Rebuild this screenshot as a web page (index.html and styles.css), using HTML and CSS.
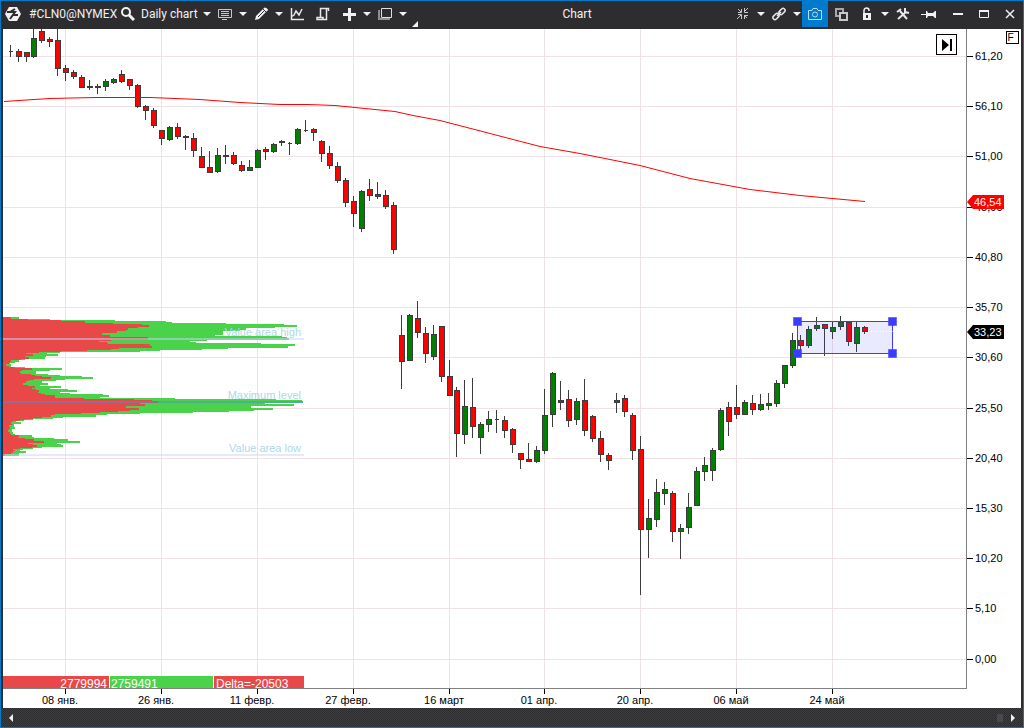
FILE: index.html
```html
<!DOCTYPE html>
<html lang="ru">
<head>
  <meta charset="UTF-8" />
  <meta name="viewport" content="width=device-width, initial-scale=1.0"/>
  <title>Chart</title>
  <link rel="stylesheet" href="styles.css">
</head>
<body>
  <header class="titlebar">
    <svg class="logo" width="18" height="16" viewBox="0 0 18 16"><path fill="#f1f1f1" d="M5 1h8l4 7-4 7H5L1 8z"/><path fill="none" stroke="#2d2d30" stroke-width="2" d="M3 6h8l-5 7M9 9h5M6 6l5-3"/></svg>
    <span class="symbol">#CLN0@NYMEX</span>
    <button class="tool find" aria-label="Find instrument"><svg width="14" height="14" viewBox="0 0 14 14"><circle cx="5" cy="5" r="4" fill="none" stroke="#f1f1f1" stroke-width="2"/><path stroke="#f1f1f1" stroke-width="3" d="M8 8l5 5"/></svg></button>
    <button class="period">Daily chart</button>
    <button class="caret" aria-label="Period list"></button>
    <button class="tool" aria-label="Template"><svg width="14" height="12" viewBox="0 0 14 12"><path fill="none" stroke="#c8c8c8" d="M.5 1.500h13v8H.5zM3 3.500h8M3 5.500h8M3 7.500h8M4 11.500h5"/></svg></button>
    <button class="caret" aria-label="Template list"></button>
    <button class="tool" aria-label="Draw"><svg width="14" height="14" viewBox="0 0 14 14"><path fill="#f1f1f1" d="M1 13l1-4 8-8q1-1 3 .5T13 4l-8 8z"/><path stroke="#2d2d30" d="M4 10l6-6M9 2l3 3"/></svg></button>
    <button class="caret" aria-label="Draw list"></button>
    <button class="tool" aria-label="Indicators"><svg width="14" height="14" viewBox="0 0 14 14"><path fill="none" stroke="#e8e8e8" stroke-width="1.500" d="M1.500 1v11.500H14M1 10l3-2 2-4 3 4 3-6"/></svg></button>
    <button class="tool" aria-label="Strategies"><svg width="14" height="14" viewBox="0 0 14 14"><path fill="none" stroke="#e8e8e8" stroke-width="1.500" d="M4.500 11V1.500h8V4M10.500 2v10.500H1V10.500h6v2"/></svg></button>
    <button class="tool" aria-label="Add"><svg width="14" height="14" viewBox="0 0 14 14"><path stroke="#f1f1f1" stroke-width="3" d="M7.500 1v13M1 7.500h13"/></svg></button>
    <button class="caret" aria-label="Add list"></button>
    <button class="tool" aria-label="Windows"><svg width="14" height="14" viewBox="0 0 14 14"><path fill="none" stroke="#e0e0e0" d="M3.500 1.500h10v9h-10z"/><path fill="none" stroke="#909090" stroke-width="2" d="M1 3v9h11"/></svg></button>
    <button class="caret" aria-label="Windows list"></button>
    <svg class="corner" width="6" height="6" viewBox="0 0 6 6"><path fill="#f1f1f1" d="M6 0v6H0z"/></svg>
    <h1 class="caption">Chart</h1>
    <button class="tool" aria-label="Snap"><svg width="12" height="12" viewBox="0 0 12 12"><path fill="none" stroke="#c8c8c8" d="M0 11l4-4M7 4l4-4M1 1l3 3M7 7l3 3M4.500 1v3.500H1M7.500 0v4.500H11M1 6.500h3.500V11M11 7.500H7.500V11"/></svg></button>
    <button class="caret" aria-label="Snap list"></button>
    <button class="tool" aria-label="Link"><svg width="14" height="14" viewBox="0 0 14 14"><g fill="none" stroke="#e8e8e8" stroke-width="1.500"><rect x="6.500" y="2.500" width="7" height="4" rx="2" transform="rotate(-45 10 4.500)"/><rect x=".5" y="7.500" width="7" height="4" rx="2" transform="rotate(-45 4 9.500)"/><path d="M5 9l4-4"/></g></svg></button>
    <button class="caret" aria-label="Link list"></button>
    <button class="tool active" aria-label="Screenshot"><svg width="14" height="12" viewBox="0 0 14 12"><path fill="none" stroke="#b8dcf4" d="M.5 2.500H4l1-2h4l1 2h3.500v9H.5z"/><circle cx="7" cy="6.500" r="2.500" fill="none" stroke="#b8dcf4"/></svg></button>
    <button class="tool" aria-label="Copy window"><svg width="14" height="14" viewBox="0 0 14 14"><path fill="none" stroke="#a8a8a8" stroke-width="2" d="M5 9H2V2h7v3"/><path fill="none" stroke="#c8c8c8" stroke-width="2" d="M6 6h7v7H6z"/></svg></button>
    <button class="tool" aria-label="Lock"><svg width="10" height="14" viewBox="0 0 10 14"><path fill="none" stroke="#f1f1f1" stroke-width="1.500" d="M2 7V3.500a2.500 2.500 0 0 1 5 0V4"/><path fill="#f1f1f1" fill-rule="evenodd" d="M1 6h8v7H1zM4 8v3h2V8z"/></svg></button>
    <button class="caret" aria-label="Lock list"></button>
    <button class="tool" aria-label="Settings"><svg width="14" height="14" viewBox="0 0 14 14"><path fill="none" stroke="#e8e8e8" stroke-width="2" d="M1 5l4-3M4 4l7 8M2 12l8-7M9 1v4l4 1"/></svg></button>
    <button class="tool" aria-label="Pin"><svg width="16" height="10" viewBox="0 0 16 10"><path stroke="#f1f1f1" d="M0 5.500h6"/><path fill="#f1f1f1" d="M5 2h1l1 2h5l2-2h1v7h-1l-2-2H7L6 9H5z"/></svg></button>
    <div class="window-buttons">
      <button class="tool" aria-label="Minimize"><svg width="10" height="10" viewBox="0 0 10 10"><path stroke="#f1f1f1" stroke-width="2" d="M0 5h10"/></svg></button>
      <button class="tool" aria-label="Maximize"><svg width="10" height="8" viewBox="0 0 10 8"><path fill="none" stroke="#f1f1f1" d="M.5 0v7.500h9V0"/><path stroke="#f1f1f1" stroke-width="2" d="M0 1h10"/></svg></button>
      <button class="tool" aria-label="Close"><svg width="10" height="10" viewBox="0 0 10 10"><path stroke="#f1f1f1" stroke-width="1.500" d="M1 1l8 8M9 1L1 9"/></svg></button>
    </div>
  </header>

  <main class="chart">
    <svg id="plot" class="plot"></svg>
    <div class="overlay">
      <button class="go-last" aria-label="Go to last bar"><svg width="12" height="12" viewBox="0 0 12 12"><path d="M1 0v12l7-6zM9 0h2v12H9z"/></svg></button>
      <button class="fixed-scale">F</button>
    </div>
  </main>

  <footer class="scrollbar">
    <button class="arrow left" aria-label="Scroll left"></button>
    <span class="grip"></span>
    <button class="arrow right" aria-label="Scroll right"></button>
  </footer>

  <script src="chart.js"></script>
</body>
</html>
```
FILE: styles.css
```css
:root {
  --accent: #007acc;
  --frame: #2d2d30;
  --light: #f1f1f1;
  --grid: #f0e1e6;
}

* {
  box-sizing: border-box;
}

body {
  margin: 0;
  height: 100vh;
  display: flex;
  flex-direction: column;
  border: 1px solid var(--accent);
  background-color: var(--frame);
  color: var(--light);
  font-family: "Liberation Sans", Arial, sans-serif;
  font-size: 11px;
  overflow: hidden;
}

button {
  margin: 0;
  padding: 0;
  border: none;
  background: none;
  color: inherit;
  font: inherit;
  cursor: pointer;
}

.titlebar {
  display: flex;
  align-items: center;
  height: 28px;
  flex: none;
  padding-bottom: 2px;
  font-family: Roboto, "Noto Sans", sans-serif;
  font-size: 12px;
  line-height: 16px;
  white-space: nowrap;
}

.titlebar svg {
  flex: none;
}

.logo {
  margin-left: 3px;
}

.symbol {
  width: 92px;
  margin-left: 7px;
}

.period {
  width: 61px;
  text-align: left;
}

.tool {
  display: flex;
  align-items: center;
  justify-content: center;
  flex: none;
  width: 26px;
  height: 26px;
}

.tool.find {
  width: 13px;
  margin-right: 7px;
}

.tool.active {
  background: var(--accent);
}

.caret {
  display: flex;
  justify-content: center;
  flex: none;
  width: 10px;
}

.caret::before {
  content: "";
  border: 4px solid transparent;
  border-top-color: var(--light);
  border-bottom: none;
}

.corner {
  align-self: flex-end;
  margin-left: 4px;
}

.caption {
  flex: 1;
  margin: 0;
  padding-left: 6px;
  text-align: center;
  font-size: 12px;
  font-weight: normal;
}

.window-buttons {
  display: flex;
  margin-left: 3px;
}

.chart {
  position: relative;
  flex: 1;
  min-height: 0;
  margin: 0 2px;
  background: #fff;
}

.plot {
  display: block;
  width: 100%;
  height: 100%;
}

.overlay {
  position: absolute;
  top: 2px;
  right: 2px;
  display: flex;
  align-items: flex-start;
  gap: 49px;
}

.go-last {
  display: flex;
  align-items: center;
  justify-content: center;
  width: 21px;
  height: 21px;
  margin-top: 3px;
  border: 1px solid #000;
  background: #fff;
}

.fixed-scale {
  width: 13px;
  height: 13px;
  padding-right: 4px;
  border: 1px solid #000;
  background: #fff;
  color: #000;
  font-size: 10px;
  line-height: 11px;
}

/* plot parts */
.grid {
  fill: var(--grid);
}

.axis {
  fill: #808080;
}

.tick {
  fill: #000;
}

.label {
  fill: #000;
  font-size: 11px;
}

.wick {
  fill: #3c3c3c;
}

.body {
  stroke: #3c3c3c;
}

.up {
  fill: #008000;
}

.down {
  fill: #f00;
}

.average {
  fill: none;
  stroke: #f00;
}

.bid {
  fill: #e84848;
}

.ask {
  fill: #4ad24a;
}

.value-line {
  fill: rgba(200, 214, 255, 0.5);
}

.max-line {
  fill: rgba(80, 140, 210, 0.5);
}

.level-name {
  fill: #add8e6;
  font-size: 11px;
}

.total {
  fill: #fff;
  font-size: 12px;
}

.zone {
  fill: rgba(60, 60, 255, 0.11);
  stroke: #3c3cff;
}

.handle {
  fill: #3c3cff;
  stroke: rgba(60, 60, 255, 0.5);
}

.last-price {
  stroke: #fff;
  stroke-dasharray: 1 2;
}

.tag-text {
  fill: #fff;
  font-size: 11px;
}

.tag-average {
  fill: #f00;
}

.tag-price {
  fill: #000;
}

.scrollbar {
  display: flex;
  align-items: center;
  flex: none;
  height: 19px;
  padding: 0 8px;
  background: repeating-conic-gradient(#2d2d30 0 25%, #3e3e42 0 50%) 0 0 / 2px 2px;
}

.arrow {
  border: 4px solid transparent;
}

.arrow.left {
  border-right-color: var(--light);
  border-left: none;
}

.arrow.right {
  border-left-color: var(--light);
  border-right: none;
}

.grip {
  width: 6px;
  height: 8px;
  margin-left: auto;
  margin-right: 8px;
  background: #4a4a4e;
}
```
FILE: chart.js
```js
const NS = "http://www.w3.org/2000/svg";
const plot = document.getElementById("plot");

// base size of the plot, the drawing is scaled from it to the window
const BASE = { left: 3, top: 29, width: 963, height: 659 };
const AXIS_WIDTH = 55;
const AXIS_HEIGHT = 20;

const prices = [
  [56, "61,20"], [106, "56,10"], [156, "51,00"], [207, "45,90"], [257, "40,80"],
  [307, "35,70"], [357, "30,60"], [408, "25,50"], [458, "20,40"], [508, "15,30"],
  [558, "10,20"], [608, "5,10"], [659, "0,00"]
];

const dates = [
  [65, "08 янв."], [161, "26 янв."], [257, "11 февр."], [353, "27 февр."], [449, "16 март"],
  [544, "01 апр."], [640, "20 апр."], [736, "06 май"], [832, "24 май"]
];

// high, body top, body bottom, low, kind (r = down, g = up, f = flat, d = doji)
const candles = [
  [45,51,52,57,"d"], [49,51,57,62,"r"], [52,52,57,62,"r"], [29,38,57,58,"g"], [29,31,41,43,"r"],
  [37,39,42,47,"r"], [29,40,69,76,"r"], [65,68,73,81,"r"], [70,72,77,79,"r"], [75,77,88,88,"r"],
  [80,86,88,90,"f"], [84,86,88,94,"f"], [79,81,87,91,"g"], [78,79,83,84,"g"], [70,74,82,83,"r"],
  [79,79,86,90,"r"], [84,85,107,108,"r"], [105,106,111,120,"r"], [108,110,126,128,"r"], [130,130,139,145,"r"],
  [126,127,140,141,"g"], [123,127,137,139,"r"], [135,136,138,150,"f"], [133,138,151,157,"r"], [147,156,168,168,"r"],
  [151,167,173,173,"r"], [148,155,172,173,"g"], [145,155,157,164,"f"], [152,155,164,165,"r"], [161,165,171,172,"r"],
  [160,167,171,171,"g"], [149,150,168,168,"g"], [147,149,152,160,"r"], [143,144,152,153,"g"], [140,141,143,146,"f"],
  [142,143,144,155,"d"], [128,129,144,145,"g"], [120,130,131,132,"d"], [128,129,133,141,"r"], [140,141,154,162,"r"],
  [146,153,166,169,"r"], [162,166,181,183,"r"], [178,180,203,207,"r"], [196,201,214,227,"r"], [190,191,229,232,"g"],
  [179,189,196,201,"r"], [182,194,197,199,"g"], [190,195,207,209,"r"], [202,205,250,254,"r"], [315,335,362,389,"r"],
  [314,315,361,361,"g"], [301,318,333,338,"r"], [327,333,354,363,"r"], [325,334,357,360,"g"], [326,326,377,382,"r"],
  [360,376,396,396,"r"], [387,390,434,457,"r"], [380,406,435,444,"g"], [378,407,427,438,"r"], [422,424,438,454,"g"],
  [411,419,425,432,"g"], [410,419,420,433,"d"], [416,420,431,438,"r"], [428,429,445,453,"r"], [453,453,460,469,"r"],
  [443,459,462,462,"r"], [446,450,462,463,"g"], [389,415,451,454,"g"], [372,373,415,427,"g"], [381,400,403,410,"g"],
  [390,399,421,427,"r"], [398,401,420,425,"g"], [379,400,431,436,"r"], [415,416,439,442,"r"], [431,438,455,462,"r"],
  [453,455,461,470,"r"], [393,400,403,413,"r"], [395,398,412,417,"r"], [413,415,451,460,"r"], [436,449,530,595,"r"],
  [499,518,530,558,"g"], [479,492,520,527,"g"], [482,489,494,505,"g"], [491,493,532,542,"r"], [524,528,532,559,"g"],
  [493,507,528,534,"g"], [467,471,506,506,"g"], [457,465,472,481,"g"], [448,450,471,481,"g"], [408,410,450,451,"g"],
  [402,407,422,436,"r"], [385,407,415,419,"r"], [400,402,415,415,"g"], [395,403,410,415,"r"], [394,404,410,411,"g"],
  [393,403,406,410,"g"], [380,383,404,407,"g"], [365,365,384,388,"g"], [333,340,366,368,"g"], [335,340,346,352,"r"],
  [326,329,346,348,"g"], [317,325,329,331,"g"], [324,324,329,356,"r"], [322,327,332,339,"g"], [316,322,327,330,"g"],
  [322,322,342,346,"r"], [322,327,344,352,"g"], [326,327,332,334,"r"]
];

const average = [
  [4,101], [34,99], [50,98], [95,97], [150,97], [200,99], [240,102], [280,104], [308,104],
  [335,105], [365,108], [395,111], [413,115], [440,120], [540,146], [580,153], [640,165],
  [690,178], [750,189], [800,195], [865,201]
];

// volume profile rows: y, height, bid edge, ask edge
const profile = [
  [317,2,11,19], [319,1,28,50], [320,1,61,115], [321,1,85,166], [322,1,85,172], [323,1,113,226],
  [324,1,142,284], [325,2,149,297], [327,1,138,275], [328,2,128,246], [330,1,126,240], [331,2,117,223],
  [333,2,102,223], [335,1,110,215], [336,1,110,282], [337,1,148,287], [338,2,148,289], [340,1,111,207],
  [341,1,99,190], [342,1,107,196], [343,1,108,261], [344,2,150,295], [346,2,152,288], [348,1,119,228],
  [349,1,111,202], [350,1,87,160], [351,1,61,140], [352,1,39,60], [353,1,26,47], [354,2,33,58],
  [356,1,25,46], [357,2,29,45], [359,1,21,25], [360,2,11,19], [362,1,10,15], [363,1,9,10],
  [364,2,6,11], [366,1,9,11], [367,1,15,25], [368,2,32,62], [370,1,22,50], [371,2,20,36],
  [373,1,21,36], [374,1,31,48], [375,1,35,60], [376,1,42,82], [377,2,51,93], [379,1,34,65],
  [380,1,29,56], [381,2,26,42], [383,2,23,48], [385,1,28,40], [386,2,35,61], [388,1,32,50],
  [389,1,36,68], [390,2,39,77], [392,1,38,60], [393,1,41,70], [394,1,45,103], [395,2,55,109],
  [397,1,55,100], [398,1,84,175], [399,1,134,276], [400,1,152,302], [401,2,158,303], [403,1,140,265],
  [404,2,145,294], [406,2,126,251], [408,2,139,273], [410,1,130,254], [411,1,118,229], [412,1,100,193],
  [413,1,81,140], [414,1,55,107], [415,2,51,96], [417,1,42,63], [418,1,33,53], [419,1,25,33],
  [420,1,20,24], [421,1,13,16], [422,2,11,21], [424,1,12,14], [425,2,9,14], [427,2,10,15],
  [429,1,9,12], [430,2,8,12], [432,2,10,13], [434,1,11,15], [435,2,19,32], [437,1,18,34],
  [438,1,25,54], [439,2,34,68], [441,2,44,80], [443,1,28,57], [444,1,33,61], [445,2,37,63],
  [447,1,32,42], [448,1,20,33], [449,1,13,23], [450,1,15,20], [451,2,13,26], [453,1,11,19],
  [454,2,5,19]
];

function add(name, attrs, text) {
  const el = document.createElementNS(NS, name);
  for (const key in attrs) el.setAttribute(key, attrs[key]);
  if (text) el.textContent = text;
  plot.appendChild(el);
}

function rect(cls, x, y, width, height) {
  add("rect", { class: cls, x, y, width: Math.max(width, 0), height: Math.max(height, 0) });
}

function text(cls, x, y, value, anchor = "start") {
  add("text", { class: cls, x, y, "text-anchor": anchor }, value);
}

function draw() {
  plot.innerHTML = "";
  const right = plot.clientWidth - AXIS_WIDTH;
  const bottom = plot.clientHeight - AXIS_HEIGHT;
  const X = v => Math.round((v - BASE.left) * right / BASE.width);
  const Y = v => Math.round((v - BASE.top) * bottom / BASE.height);

  prices.forEach(([y]) => rect("grid", 0, Y(y), right, 1));
  dates.forEach(([x]) => rect("grid", X(x), 0, 1, bottom));

  drawProfile(X, Y);
  drawCandles(X, Y);
  add("polyline", { class: "average", points: average.map(([x, y]) => X(x) + "," + (Y(y) + 0.5)).join(" ") });
  drawZone(X, Y);
  drawTotals(X, bottom);

  rect("axis", right, 0, 1, bottom);
  rect("axis", 0, bottom, right + 1, 1);
  prices.forEach(([y, name]) => {
    rect("tick", right + 1, Y(y), 6, 1);
    text("label", right + 9, Y(y) + 4, name);
  });
  dates.forEach(([x, name]) => {
    rect("tick", X(x), bottom + 1, 1, 5);
    text("label", X(x) - 5, bottom + 16, name, "middle");
  });
  drawTag("tag-average", right, Y(202), "46,54");
  drawTag("tag-price", right, Y(332), "33,23");
}

function drawProfile(X, Y) {
  profile.forEach(([y, h, bid, ask]) => {
    const height = Y(y + h) - Y(y);
    rect("bid", 0, Y(y), X(bid), height);
    rect("ask", X(bid), Y(y), X(ask) - X(bid), height);
  });
  rect("value-line", 0, Y(338), X(304), 2);
  rect("max-line", 0, Y(401), X(303), 2);
  rect("value-line", 0, Y(454), X(304), 2);
  text("level-name", X(301), Y(336), "Value area high", "end");
  text("level-name", X(301), Y(399), "Maximum level", "end");
  text("level-name", X(301), Y(452), "Value area low", "end");
}

function drawCandles(X, Y) {
  candles.forEach(([high, top, low, bottom, kind], i) => {
    const x = X((i < 3 ? 10 : i < 56 ? 9 : 8) + 8 * i);
    rect("wick", x, Y(high), 1, Y(bottom) - Y(high));
    if (kind === "d") {
      rect("wick", x - 1, Y(top), 4, 1);
    } else if (kind === "f") {
      rect("wick", x - 2, Y(top), 6, 2);
    } else {
      add("rect", {
        class: "body " + (kind === "g" ? "up" : "down"),
        x: x - 1.5, y: Y(top) + 0.5, width: 5, height: Math.max(Y(low) - Y(top) - 1, 1)
      });
    }
  });
}

function drawZone(X, Y) {
  const [x1, y1, x2, y2] = [X(797) + 0.5, Y(321) + 0.5, X(892) + 0.5, Y(353) + 0.5];
  add("rect", { class: "zone", x: x1, y: y1, width: x2 - x1, height: y2 - y1 });
  add("line", { class: "last-price", x1: X(868), y1: Y(331) + 0.5, x2, y2: Y(331) + 0.5 });
  [[x1, y1], [x2, y1], [x1, y2], [x2, y2]].forEach(([x, y]) => {
    add("rect", { class: "handle", x: x - 4, y: y - 4, width: 8, height: 8 });
  });
}

function drawTotals(X, bottom) {
  rect("bid", 0, bottom - 12, X(109), 12);
  rect("ask", X(110), bottom - 12, X(213) - X(110), 12);
  rect("bid", X(214), bottom - 12, X(304) - X(214), 12);
  text("total", X(107), bottom, "2779994", "end");
  text("total", X(111), bottom, "2759491");
  text("total", X(216), bottom, "Delta=-20503");
}

function drawTag(cls, x, y, value) {
  add("path", { class: cls, d: `M${x + 1} ${y}l6-7h31v14h-31z` });
  text("tag-text", x + 8, y + 4, value);
}

window.addEventListener("resize", draw);
draw();
```
